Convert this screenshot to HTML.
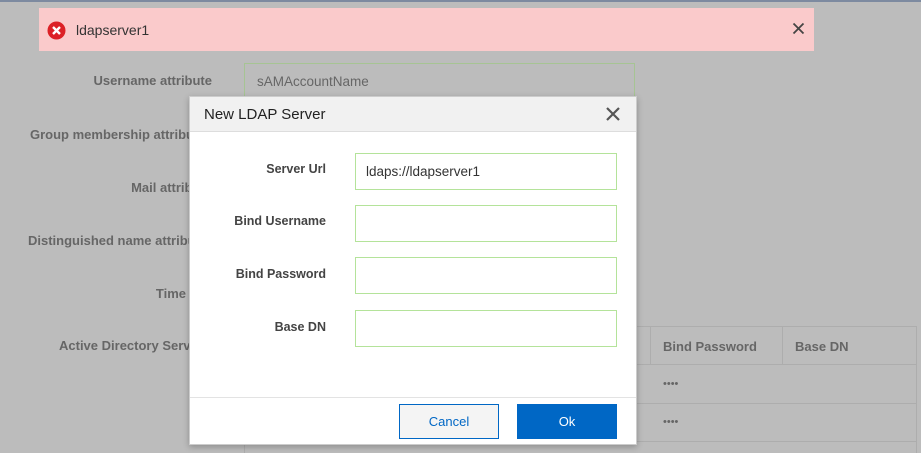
<!DOCTYPE html>
<html><head><meta charset="utf-8"><style>
*{box-sizing:border-box;margin:0;padding:0}
body{width:921px;height:453px;overflow:hidden;background:#bcbcbc;font-family:"Liberation Sans",sans-serif;position:relative}
.abs{position:absolute}
.lbl{position:absolute;font-size:13px;font-weight:bold;color:#666;text-align:right;width:212px;left:0}
.mlbl{position:absolute;font-size:12.5px;font-weight:bold;color:#444;text-align:right;width:136px;left:0}
.inp{position:absolute;left:165px;width:262px;height:37px;border:1px solid #b4e39a;background:#fff;font-size:13.5px;color:#333;padding:10px 0 0 10px}
</style></head><body>
<div class="abs" style="left:0;top:0;width:921px;height:2px;background:#7d8aa0"></div>
<div class="abs" style="left:39px;top:8px;width:775px;height:43px;background:#facacb"></div>
<svg class="abs" style="left:47px;top:21px" width="19" height="19"><circle cx="9.5" cy="9.5" r="9" fill="#dc2026"/><path d="M6 6L13 13M13 6L6 13" stroke="#fff" stroke-width="2.4"/></svg>
<div class="abs" style="left:76px;top:22px;font-size:14px;color:#333">ldapserver1</div>
<svg class="abs" style="left:792px;top:22px" width="13" height="13"><path d="M1.5 1.5L11.5 11.5M11.5 1.5L1.5 11.5" stroke="#444" stroke-width="1.8"/></svg>

<div class="lbl" style="top:73px">Username attribute</div>
<div class="abs" style="left:244px;top:63px;width:391px;height:36px;border:1px solid #a6c493;font-size:13.5px;color:#666;padding:10px 0 0 12px">sAMAccountName</div>
<div class="lbl" style="top:127px;width:230px;text-align:left;left:30px">Group membership attribute</div>
<div class="lbl" style="top:180px;left:0">Mail attribute</div>
<div class="lbl" style="top:233px;left:28px;text-align:left;width:230px">Distinguished name attribute</div>
<div class="lbl" style="top:286px">Time Out</div>
<div class="lbl" style="top:338px;left:59px;text-align:left;width:200px">Active Directory Servers</div>

<div class="abs" style="left:244px;top:326px;width:673px;height:127px;border:1px solid #adadad;border-bottom:none"></div>
<div class="abs" style="left:244px;top:364px;width:673px;height:1px;background:#adadad"></div>
<div class="abs" style="left:244px;top:403px;width:673px;height:1px;background:#adadad"></div>
<div class="abs" style="left:244px;top:441px;width:673px;height:1px;background:#adadad"></div>
<div class="abs" style="left:650px;top:327px;width:1px;height:37px;background:#adadad"></div>
<div class="abs" style="left:782px;top:327px;width:1px;height:37px;background:#adadad"></div>
<div class="abs" style="left:663px;top:339px;font-size:13px;font-weight:bold;color:#666">Bind Password</div>
<div class="abs" style="left:795px;top:339px;font-size:13px;font-weight:bold;color:#666">Base DN</div>
<div class="abs" style="left:663px;top:378px;font-size:11px;color:#666">••••</div>
<div class="abs" style="left:663px;top:416px;font-size:11px;color:#666">••••</div>

<div class="abs" style="left:189px;top:96px;width:448px;height:349px;background:#fff;border:1px solid #ccc;box-shadow:0 2px 6px rgba(0,0,0,.25)">
  <div style="height:35px;background:#f1f1f1;border-bottom:1px solid #ddd;position:relative">
    <div class="abs" style="left:14px;top:9px;font-size:15px;color:#222">New LDAP Server</div>
    <svg class="abs" style="left:416px;top:10px" width="14" height="14"><path d="M1 1L13 13M13 1L1 13" stroke="#555" stroke-width="2.2"/></svg>
  </div>
  <div class="mlbl" style="top:65px">Server Url</div>
  <div class="inp" style="top:56px">ldaps://ldapserver1</div>
  <div class="mlbl" style="top:117px">Bind Username</div>
  <div class="inp" style="top:108px"></div>
  <div class="mlbl" style="top:170px">Bind Password</div>
  <div class="inp" style="top:160px"></div>
  <div class="mlbl" style="top:223px">Base DN</div>
  <div class="inp" style="top:213px"></div>
  <div class="abs" style="left:0;top:300px;width:446px;height:1px;background:#e3e3e3"></div>
  <div class="abs" style="left:209px;top:307px;width:100px;height:35px;border:1px solid #0067c5;background:#f4f4f4;color:#0067c5;font-size:13px;text-align:center;line-height:33px">Cancel</div>
  <div class="abs" style="left:327px;top:307px;width:100px;height:35px;background:#0067c5;color:#fff;font-size:13px;text-align:center;line-height:35px">Ok</div>
</div>
</body></html>
